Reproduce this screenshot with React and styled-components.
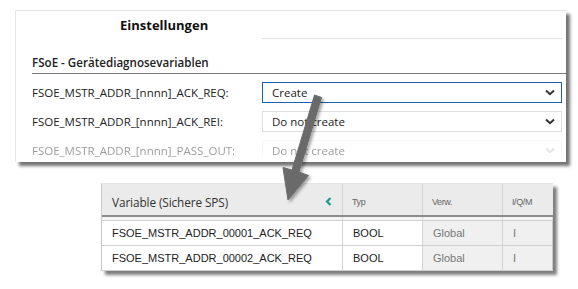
import styled, { createGlobalStyle } from 'styled-components';

const GlobalStyle = createGlobalStyle`
  html, body {
    margin: 0;
    padding: 0;
    background: #fff;
  }
  body {
    font-family: 'Open Sans', 'Noto Sans', sans-serif;
    color: #222;
  }
`;

const rows = [
  { label: 'FSOE_MSTR_ADDR_[nnnn]_ACK_REQ:', value: 'Create', active: true },
  { label: 'FSOE_MSTR_ADDR_[nnnn]_ACK_REI:', value: 'Do not create' },
  { label: 'FSOE_MSTR_ADDR_[nnnn]_PASS_OUT:', value: 'Do not create', faded: true },
];

const variables = [
  { name: 'FSOE_MSTR_ADDR_00001_ACK_REQ', type: 'BOOL', use: 'Global', iqm: 'I' },
  { name: 'FSOE_MSTR_ADDR_00002_ACK_REQ', type: 'BOOL', use: 'Global', iqm: 'I' },
];

const Chevron = ({ color }) => (
  <svg width="10" height="7" viewBox="0 0 10 7">
    <path d="M1 1.5 L5 5.2 L9 1.5" fill="none" stroke={color} strokeWidth="2" />
  </svg>
);

const App = () => (
  <Page>
    <GlobalStyle />
    <Panel>
      <TitleRow>
        <Title>Einstellungen</Title>
        <TitleLine />
      </TitleRow>
      <Section>
        <SectionHeading>FSoE - Gerätediagnosevariablen</SectionHeading>
        <Fields>
          {rows.map((r) => (
            <FieldRow key={r.label} $faded={r.faded}>
              <Label>{r.label}</Label>
              <Select $active={r.active} $faded={r.faded}>
                <span>{r.value}</span>
                <Chevron color={r.faded ? '#c4c4c4' : '#333'} />
              </Select>
            </FieldRow>
          ))}
        </Fields>
      </Section>
    </Panel>

    <Table>
      <HeaderRow>
        <HeadCell $main>
          Variable (Sichere SPS)
          <svg width="7" height="9" viewBox="0 0 7 9">
            <path d="M5.5 1 L2 4.5 L5.5 8" fill="none" stroke="#1e9a96" strokeWidth="2.2" />
          </svg>
        </HeadCell>
        <HeadCell>Typ</HeadCell>
        <HeadCell>Verw.</HeadCell>
        <HeadCell>I/Q/M</HeadCell>
      </HeaderRow>
      <Spacer>
        <span />
        <span />
        <span />
        <span />
      </Spacer>
      {variables.map((v) => (
        <BodyRow key={v.name}>
          <Cell>{v.name}</Cell>
          <Cell>{v.type}</Cell>
          <Cell $muted>{v.use}</Cell>
          <Cell $muted>{v.iqm}</Cell>
        </BodyRow>
      ))}
    </Table>

    <Arrow width="578" height="289" viewBox="0 0 578 289">
      <defs>
        <filter id="sh" x="-50%" y="-50%" width="200%" height="200%">
          <feDropShadow dx="2" dy="2" stdDeviation="1.5" floodColor="#000" floodOpacity="0.35" />
        </filter>
      </defs>
      <polygon
        points="314.5,95 321.5,97.5 299,172 308.5,175.5 288,200 283,167.5 292,170"
        fill="#6a6a6a"
        stroke="#6a6a6a"
        strokeWidth="1"
        strokeLinejoin="round"
        filter="url(#sh)"
      />
    </Arrow>
  </Page>
);

export default App;

const Page = styled.div`
  position: relative;
  width: 578px;
  height: 289px;
  padding: 10px 0 0 15px;
  box-sizing: border-box;
  overflow: hidden;
`;

const Panel = styled.div`
  width: 551px;
  height: 152px;
  box-sizing: border-box;
  background: #fff;
  border-top: 1px solid #e4e4e4;
  border-left: 1px solid #e8e8e8;
  box-shadow: 4px 4px 3px rgba(0, 0, 0, 0.55);
  overflow: hidden;
`;

const TitleRow = styled.div`
  display: grid;
  grid-template-columns: 246px 300px;
  align-items: start;
  height: 28px;
`;

const Title = styled.h1`
  margin: 0;
  padding: 5px 0 0 104px;
  font-size: 13px;
  font-weight: 700;
  line-height: 18px;
  color: #111;
`;

const TitleLine = styled.div`
  height: 1px;
  margin-top: 27px;
  background: #e2e2e2;
`;

const Section = styled.div`
  padding: 16px 0 0 16px;
`;

const SectionHeading = styled.h2`
  margin: 0;
  padding-bottom: 3px;
  font-size: 11.6px;
  font-weight: 600;
  line-height: 15px;
  color: #222;
  border-bottom: 1px solid #7a7a7a;
`;

const Fields = styled.div`
  display: flex;
  flex-direction: column;
  gap: 8px;
  padding-top: 8px;
  height: 75px;
  overflow: hidden;
`;

const FieldRow = styled.div`
  display: grid;
  grid-template-columns: 230px 300px;
  align-items: center;
  flex: none;
  opacity: ${(p) => (p.$faded ? 0.45 : 1)};
`;

const Label = styled.div`
  font-size: 11.5px;
  color: #222;
  white-space: nowrap;
`;

const Select = styled.div`
  display: flex;
  align-items: center;
  justify-content: space-between;
  height: 21px;
  box-sizing: border-box;
  padding: 0 6px 0 9px;
  font-size: 11.5px;
  color: #222;
  border: 1px solid ${(p) => (p.$active ? '#1c5fb0' : p.$faded ? '#ececec' : '#dedede')};
`;

const Table = styled.div`
  margin: 21px 0 0 86px;
  width: 451px;
  background: #fff;
  border-top: 1px solid #e6e6e6;
  border-left: 1px solid #c8c8c8;
  box-shadow: 4px 4px 3px rgba(0, 0, 0, 0.5);
`;

const columns = '241px 80px 80px 50px';

const HeaderRow = styled.div`
  display: grid;
  grid-template-columns: ${columns};
  height: 31px;
  background: #ebebeb;
  border-bottom: 2px solid #8c8c8c;
`;

const HeadCell = styled.div`
  display: flex;
  align-items: center;
  justify-content: space-between;
  padding: 4px 10px 0 ${(p) => (p.$main ? '10px' : '9px')};
  box-sizing: border-box;
  font-family: ${(p) => (p.$main ? "'Open Sans', sans-serif" : "'Liberation Sans', Arial, sans-serif")};
  font-size: ${(p) => (p.$main ? '11.8px' : '9px')};
  letter-spacing: ${(p) => (p.$main ? '-0.1px' : '-0.4px')};
  color: ${(p) => (p.$main ? '#333' : '#666')};
  border-right: 1px solid #d2d2d2;
  &:last-child {
    border-right: none;
  }
`;

const Spacer = styled.div`
  display: grid;
  grid-template-columns: ${columns};
  height: 3px;
  border-bottom: 1px solid #d0d0d0;
  background: #f4f4f4;
  span {
    border-right: 1px solid #d8d8d8;
  }
`;

const BodyRow = styled.div`
  display: grid;
  grid-template-columns: ${columns};
  height: 24px;
  border-bottom: 1px solid #cfcfcf;
`;

const Cell = styled.div`
  display: flex;
  align-items: center;
  padding-left: 10px;
  font-family: 'Liberation Sans', Arial, sans-serif;
  font-size: 11px;
  color: ${(p) => (p.$muted ? '#777' : '#222')};
  background: ${(p) => (p.$muted ? '#f0f0f0' : '#fff')};
  border-right: 1px solid #d2d2d2;
  &:last-child {
    border-right: 1px solid #c8c8c8;
  }
`;

const Arrow = styled.svg`
  position: absolute;
  left: 0;
  top: 0;
  pointer-events: none;
`;
